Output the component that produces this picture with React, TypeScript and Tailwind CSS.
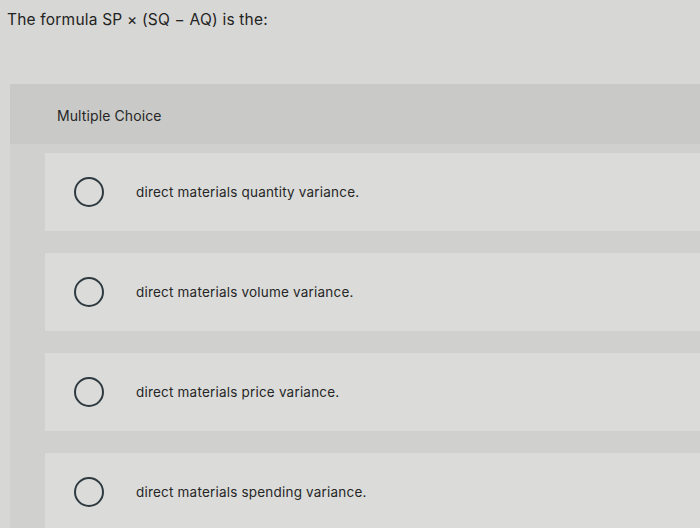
import React from 'react';

const options = [
  'direct materials quantity variance.',
  'direct materials volume variance.',
  'direct materials price variance.',
  'direct materials spending variance.',
];

const Radio: React.FC = () => (
  <span className="block w-[30px] h-[30px] rounded-full border-2 border-[#2e3a40] shrink-0" />
);

export default function App() {
  return (
    <div
      className="w-[700px] h-[528px] overflow-hidden bg-[#d7d7d5] text-[#232323]"
      style={{ fontFamily: 'Inter, "Open Sans", sans-serif' }}
    >
      {/* Question */}
      <p className="pt-[9px] pl-[7px] text-[15.5px] leading-[22px] tracking-[0.2px]">
        The formula SP × (SQ − AQ) is the:
      </p>

      {/* Answer panel */}
      <div className="mt-[53px] ml-[10px] bg-[#d0d0ce]">
        <div className="h-[60px] bg-[#c9c9c7] flex items-center pl-[47px] pt-[2px]">
          <span className="text-[14px] tracking-[0.1px] text-[#262626]">Multiple Choice</span>
        </div>

        <div className="pt-[9px] pl-[35px] flex flex-col gap-[22px]">
          {options.map((text, i) => (
            <div key={i} className="h-[78px] bg-[#dbdcda] flex items-center pl-[29px]">
              <Radio />
              <span className="ml-[32px] text-[13.5px] tracking-[0.2px] text-[#262626]">{text}</span>
            </div>
          ))}
        </div>
      </div>
    </div>
  );
}
